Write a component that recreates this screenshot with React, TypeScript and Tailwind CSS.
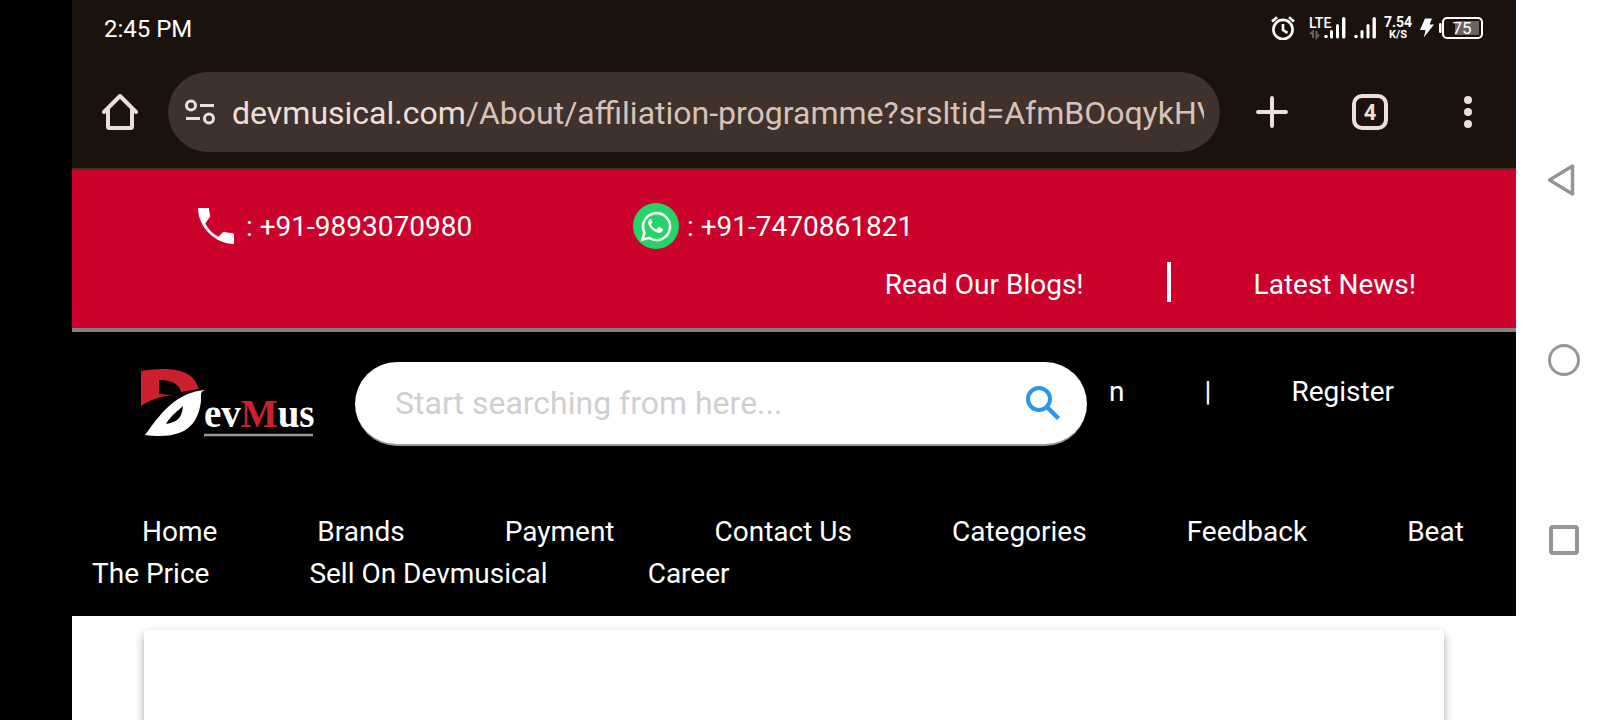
import type { ReactNode } from 'react';

const links = ['Home', 'Brands', 'Payment', 'Contact Us', 'Categories', 'Feedback', 'Beat The Price', 'Sell On Devmusical', 'Career'];

function StatusBar() {
  return (
    <div className="flex h-14 items-center justify-between px-8 text-2xl text-white">
      <time className="pt-0.5">2:45 PM</time>
      <div className="flex items-center">
        <svg viewBox="0 0 24 24" className="size-6" fill="none" stroke="currentColor" strokeWidth="2.6">
          <circle cx="12" cy="13.5" r="9.6" />
          <path d="M12 8v6l4.5 2.8M1 5.5 6 1.2M23 5.5 18 1.2" />
        </svg>
        <svg viewBox="0 0 37 24" className="ml-3.5 h-6 w-[37px]" fill="currentColor">
          <text x="0" y="12" fontSize="14" fontWeight="500" fontFamily="Roboto, sans-serif">LTE</text>
          <path d="M4 22v-6.500L1 18M7.500 15v6.500L10 18.500" stroke="#6b625d" strokeWidth="2" fill="none" />
          <circle cx="17" cy="20.500" r="1.800" />
          <rect x="21" y="14" width="3" height="8.500" rx="1.500" />
          <rect x="27" y="8" width="3" height="14.500" rx="1.500" />
          <rect x="33" y="1" width="3.400" height="21.500" rx="1.500" />
        </svg>
        <svg viewBox="0 0 22 24" className="ml-2 h-6 w-[22px]" fill="currentColor">
          <circle cx="2" cy="20.500" r="1.800" />
          <rect x="6.500" y="14" width="3" height="8.500" rx="1.500" />
          <rect x="12.500" y="8" width="3" height="14.500" rx="1.500" />
          <rect x="18.500" y="1" width="3.400" height="21.500" rx="1.500" />
        </svg>
        <div className="ml-2 flex w-7 flex-col items-center font-bold">
          <span className="text-[14px] leading-[13px]">7.54</span>
          <span className="text-[11px] leading-[11px]">K/S</span>
        </div>
        <svg viewBox="0 0 14 20" className="ml-2 h-5 w-[14px]" fill="currentColor">
          <path d="M5 .5h7L9.500 6.500H14L3.800 19.500 5.500 12H0z" />
        </svg>
        <svg viewBox="0 0 46 24" className="ml-1 h-6 w-[46px]" fill="none">
          <rect x="1" y="7" width="2.500" height="10" rx="1.200" fill="#fff" />
          <rect x="5" y="2" width="39" height="20" rx="4" stroke="#fff" strokeWidth="2" />
          <path d="M17 5h24v14H17z" fill="#6b615d" />
          <text x="24" y="18" fontSize="17" textAnchor="middle" fill="#fff" fontFamily="Roboto, sans-serif">75</text>
        </svg>
      </div>
    </div>
  );
}

function IconButton({ label, children }: { label: string; children: ReactNode }) {
  return (
    <button type="button" aria-label={label} className="flex size-12 shrink-0 items-center justify-center">
      {children}
    </button>
  );
}

function Toolbar() {
  return (
    <div className="flex h-[114px] items-center border-b-2 border-[#3f312b] px-6 text-[#ede0db]">
      <IconButton label="Home page">
        <svg viewBox="0 0 36 36" className="size-9" fill="none" stroke="currentColor" strokeWidth="4" strokeLinejoin="round" strokeLinecap="round">
          <path d="M2 18 18 2l16 16M6 15v17.500a1.500 1.500 0 0 0 1.500 1.500h21a1.500 1.500 0 0 0 1.500-1.500V15" />
        </svg>
      </IconButton>
      <div className="ml-6 flex h-20 min-w-0 flex-1 items-center rounded-full bg-[#3f312b] px-4">
        <svg viewBox="0 0 32 26" className="h-[26px] w-8 shrink-0" fill="none" stroke="currentColor" strokeWidth="3">
          <circle cx="7" cy="6.500" r="4.500" />
          <circle cx="25" cy="19.500" r="4.500" />
          <path d="M16 6.500h14M2 19.500h14" />
        </svg>
        <div className="ml-4 flex-1 overflow-hidden pt-0.5 text-[32px] leading-10 whitespace-nowrap">
          devmusical.com<span className="text-[#d7c2b9]">/About/affiliation-programme?srsltid=AfmBOoqykHV</span>
        </div>
      </div>
      <div className="ml-7 flex items-center gap-[50px]">
        <IconButton label="New tab">
          <svg viewBox="0 0 32 32" className="size-8" stroke="currentColor" strokeWidth="4" strokeLinecap="round">
            <path d="M16 2v28M2 16h28" />
          </svg>
        </IconButton>
        <IconButton label="Tabs">
          <span className="flex size-9 items-center justify-center rounded-[10px] border-4 border-current text-[22px] font-bold">4</span>
        </IconButton>
        <IconButton label="More">
          <svg viewBox="0 0 8 32" className="h-8 w-2" fill="currentColor">
            <circle cx="4" cy="4" r="4" />
            <circle cx="4" cy="16" r="4" />
            <circle cx="4" cy="28" r="4" />
          </svg>
        </IconButton>
      </div>
    </div>
  );
}

function ContactBar() {
  return (
    <div className="shrink-0 border-b-4 border-[#808080] bg-[#ca022c] px-[100px] pt-8 pb-5 text-[28px] leading-[46px]">
      <div className="flex">
        <a href="tel:+919893070980" className="flex w-[461px] items-center pl-[26px]">
          <svg viewBox="3 3 18 18" className="mr-3 size-9" fill="currentColor">
            <path d="M6.620 10.790c1.440 2.830 3.760 5.140 6.590 6.590l2.200-2.200c.270-.270.670-.360 1.020-.240 1.120.370 2.330.570 3.570.570L21 16v5C11.610 21 3 12.390 3 3h5.500c0 1.250.200 2.450.570 3.570.110.350.030.740-.250 1.020z" />
          </svg>
          <span className="pt-0.5">: +91-9893070980</span>
        </a>
        <a href="https://wa.me/917470861821" className="flex items-center">
          <svg viewBox="0 0 46 46" className="mr-2 size-[46px]" fill="none">
            <circle cx="23" cy="23" r="23" fill="#25d366" />
            <path d="M9.500 36.500l2-6.800A13.500 13.500 0 1 1 16.300 35z" stroke="#fff" strokeWidth="2.600" />
            <path d="M18.300 16c-.500-.300-1.500-.200-2 .500-1.300 1.300-1.500 3.400-.600 5.200 2 3.800 4.600 6.300 8.600 7.900 2.300.8 4.900-.3 5.600-2.400.1-.7.1-1.200-.3-1.400l-3.400-1.700c-.5-.2-.8 0-1.100.4l-1.200 1.500c-.2.300-.6.300-1 .1-2.100-.9-3.700-2.300-4.900-4.400-.2-.4-.1-.6.200-.9l1-1.300c.200-.300.200-.500.100-.900z" fill="#fff" />
          </svg>
          <span className="pt-0.5">: +91-7470861821</span>
        </a>
      </div>
      <div className="flex items-start justify-end pt-3">
        <a href="#blogs">Read Our Blogs!</a>
        <span className="mx-[83px] h-10 w-1 bg-white" />
        <a href="#news">Latest News!</a>
      </div>
    </div>
  );
}

function Logo() {
  return (
    <a href="#home" aria-label="DevMus" className="shrink-0">
      <svg viewBox="0 0 174 72" className="h-[72px] w-[174px]">
        <path d="M1 3C25-1 52-1 58 19L59 21 41 24C40 17 33 12 19 12V26L33 27C20 28 10 32 1 38z" fill="#cc202f" />
        <path fillRule="evenodd" d="M5 67C21 45 36 24 66 22 60 23 61 26 61 33 58 58 44 72 5 67zM26 56C40 54 42 47 43 38 38 43 32 46 26 56z" fill="#fff" />
        <text x="64" y="59" fontFamily="Liberation Serif, serif" fontWeight="700" fontSize="39" fill="#fff">
          ev<tspan fill="#cc202f">M</tspan>us
        </text>
        <path d="M64 67h109" stroke="#999" strokeWidth="2.500" />
      </svg>
    </a>
  );
}

function SiteHeader() {
  return (
    <header className="shrink-0 bg-black pt-[30px] pb-[21px] text-[28px]">
      <div className="flex items-start pr-[122px] pl-[68px]">
        <div className="flex self-stretch items-center"><Logo /></div>
        <form className="ml-[41px] flex h-[84px] min-w-0 flex-1 items-center rounded-full border-b-2 border-[#999] bg-white pr-6 pl-10">
          <input type="search" aria-label="Search" placeholder="Start searching from here..." className="min-w-0 flex-1 text-[32px] text-black outline-none placeholder:text-[#cfcfcf]" />
          <button type="button" aria-label="Search" className="p-0.5">
            <svg viewBox="0 0 36 36" className="size-9" fill="none" stroke="#2b97ea" strokeWidth="4">
              <circle cx="14" cy="14" r="11" />
              <path d="m22.500 22.500 11 11" strokeWidth="4.500" />
            </svg>
          </button>
        </form>
        <div className="flex pt-3 leading-9">
          <a href="#login" className="pl-[22px]">n</a>
          <span className="px-20">|</span>
          <a href="#register">Register</a>
        </div>
      </div>
      <nav className="px-5 pt-[65px] leading-[42px]">
        {links.map((l) => (
          <a key={l} href={'#' + l.toLowerCase().replaceAll(' ', '-')} className="px-[50px]">{l}</a>
        ))}
      </nav>
    </header>
  );
}

function SystemNav() {
  return (
    <nav aria-label="System" className="flex w-24 shrink-0 flex-col items-center justify-between bg-white py-[156px] text-[#969696]">
      <IconButton label="Back">
        <svg viewBox="0 0 32 32" className="size-8" fill="none" stroke="currentColor" strokeWidth="3.500" strokeLinejoin="round">
          <path d="M24.500 2v28L1.500 16z" />
        </svg>
      </IconButton>
      <IconButton label="Home">
        <span className="size-8 rounded-full border-3 border-current" />
      </IconButton>
      <IconButton label="Recent apps">
        <span className="size-[30px] rounded-[4px] border-4 border-current" />
      </IconButton>
    </nav>
  );
}

export default function App() {
  return (
    <div className="flex h-screen overflow-hidden bg-black pl-[72px] font-[Roboto,sans-serif] text-white">
      <div className="flex min-w-0 flex-1 flex-col bg-white">
        <div className="shrink-0 bg-[#1b120d]">
          <StatusBar />
          <Toolbar />
        </div>
        <ContactBar />
        <SiteHeader />
        <main className="flex-1 px-[72px] pt-[14px]">
          <section className="h-[400px] rounded bg-white shadow-[0_4px_10px_rgba(0,0,0,0.35)]" />
        </main>
      </div>
      <SystemNav />
    </div>
  );
}
